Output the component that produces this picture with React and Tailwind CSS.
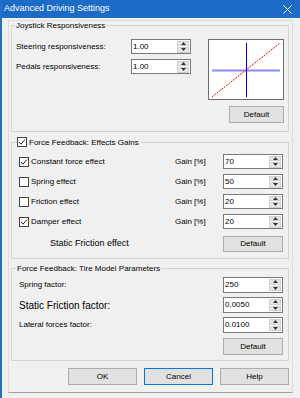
import React from 'react';

function Arrow({ up }) {
  return (
    <svg width="5" height="3" viewBox="0 0 5 3">
      <polygon points={up ? '0,3 2.5,0 5,3' : '0,0 2.5,3 5,0'} fill="#333" />
    </svg>
  );
}

function SpinBox({ value, h = 'h-[15px]' }) {
  return (
    <div className={`flex ${h} w-[60px] shrink-0 items-center border border-[#7a7a7a] bg-white pl-[1px]`}>
      <span className="flex-1 text-[8px] leading-none">{value}</span>
      <div className="mr-[1px] flex h-[12px] w-[12px] flex-col gap-[1px]">
        <div className="flex flex-1 items-center justify-center border border-[#cfcfcf] bg-[#e6e6e6]">
          <Arrow up />
        </div>
        <div className="flex flex-1 items-center justify-center border border-[#cfcfcf] bg-[#e6e6e6]">
          <Arrow />
        </div>
      </div>
    </div>
  );
}

function Check({ on }) {
  return (
    <div className="flex h-[10px] w-[10px] shrink-0 items-center justify-center border border-[#444] bg-white">
      {on && (
        <svg width="8" height="8" viewBox="0 0 8 8">
          <path d="M1 4 L3 6.2 L7 1.5" fill="none" stroke="#222" strokeWidth="1" />
        </svg>
      )}
    </div>
  );
}

function Btn({ children, w = 'w-[60px]', h = 'h-[17px]', focus }) {
  return (
    <div
      className={`flex ${w} ${h} shrink-0 items-center justify-center border ${
        focus ? 'border-[#0078d7]' : 'border-[#adadad]'
      } bg-[#e1e1e1] text-[8px] leading-none`}
    >
      {children}
    </div>
  );
}

function Group({ title, className = '', children }) {
  return (
    <div className={`ml-[2px] w-[278px] border border-[#d5d5d5] ${className}`}>
      {title}
      {children}
    </div>
  );
}

const effects = [
  { name: 'Constant force effect', on: true, gain: '70' },
  { name: 'Spring effect', on: false, gain: '50' },
  { name: 'Friction effect', on: false, gain: '20' },
  { name: 'Damper effect', on: true, gain: '20' },
];

export default function App() {
  return (
    <div className="flex h-[398px] w-[300px] flex-col overflow-hidden border-l-2 border-[#2370c8] bg-[#f0f0f0] font-['Liberation_Sans',Arial,sans-serif] text-black">
      {/* title bar */}
      <div className="flex h-[18px] shrink-0 items-center justify-between bg-[#1c6bc7] pl-[2px] pr-[8px] text-[9px] text-white">
        <span>Advanced Driving Settings</span>
        <svg width="9" height="9" viewBox="0 0 9 9">
          <path d="M0.5 0.5 L8.5 8.5 M8.5 0.5 L0.5 8.5" stroke="#fff" strokeWidth="1" />
        </svg>
      </div>

      <div className="ml-[6px] mt-[2px] flex w-[285px] flex-col border border-[#dcdcdc] border-b-[#a0a0a0] pb-[7px]">
        {/* joystick */}
        <Group
          className="mt-[4px]"
          title={
            <div className="-mt-[5px] ml-[3px] w-fit bg-[#f0f0f0] px-[1px] text-[8px] leading-[9px]">
              Joystick Responsiveness
            </div>
          }
        >
          <div className="flex justify-between pb-[8px] pl-[4px] pr-[4px] pt-[9px]">
            <div className="flex flex-col gap-[5px]">
              <div className="flex items-center">
                <span className="w-[115px] text-[8px]">Steering responsiveness:</span>
                <SpinBox value="1.00" />
              </div>
              <div className="flex items-center">
                <span className="w-[115px] text-[8px]">Pedals responsiveness:</span>
                <SpinBox value="1.00" />
              </div>
            </div>
            <div className="flex flex-col items-end">
              <div className="h-[61px] w-[76px] border border-[#6e6e6e] bg-white">
                <svg width="74" height="59" viewBox="0 0 74 59">
                  <line x1="3" y1="30.5" x2="71" y2="30.5" stroke="#8a8aff" strokeWidth="2" />
                  <line x1="37.5" y1="3" x2="37.5" y2="57" stroke="#0000e0" strokeWidth="1" />
                  <line x1="3" y1="57" x2="71" y2="3" stroke="#ff0000" strokeWidth="1" strokeDasharray="2 1" />
                </svg>
              </div>
              <div className="mt-[6px]">
                <Btn w="w-[55px]">Default</Btn>
              </div>
            </div>
          </div>
        </Group>

        {/* effects gains */}
        <Group
          className="mt-[10px]"
          title={
            <div className="-mt-[6px] ml-[5px] flex h-[10px] w-fit items-center gap-[2px] bg-[#f0f0f0] pr-[2px]">
              <Check on />
              <span className="text-[8px] leading-[9px]">Force Feedback: Effects Gains</span>
            </div>
          }
        >
          <div className="flex flex-col gap-[5px] pl-[7px] pr-[5px] pt-[7px]">
            {effects.map((e) => (
              <div key={e.name} className="flex h-[15px] items-center">
                <Check on={e.on} />
                <span className="ml-[2px] flex-1 text-[8px]">{e.name}</span>
                <span className="w-[48px] text-[8px]">Gain [%]</span>
                <SpinBox value={e.gain} />
              </div>
            ))}
          </div>
          <div className="mt-[7px] flex items-center justify-between pb-[6px] pl-[38px] pr-[5px]">
            <span className="text-[9px]">Static Friction effect</span>
            <Btn h="h-[16px]">Default</Btn>
          </div>
        </Group>

        {/* tire model */}
        <Group
          className="mt-[9px]"
          title={
            <div className="-mt-[5px] ml-[4px] w-fit bg-[#f0f0f0] px-[1px] text-[8px] leading-[9px]">
              Force Feedback: Tire Model Parameters
            </div>
          }
        >
          <div className="flex flex-col gap-[4px] pl-[7px] pr-[5px] pt-[4px]">
            <div className="flex items-center justify-between">
              <span className="text-[8px]">Spring factor:</span>
              <SpinBox value="250" h="h-[16px]" />
            </div>
            <div className="flex items-center justify-between">
              <span className="text-[10px]">Static Friction factor:</span>
              <SpinBox value="0.0050" h="h-[16px]" />
            </div>
            <div className="flex items-center justify-between">
              <span className="text-[8px]">Lateral forces factor:</span>
              <SpinBox value="0.0100" h="h-[16px]" />
            </div>
          </div>
          <div className="mt-[5px] flex justify-end pb-[5px] pr-[5px]">
            <Btn>Default</Btn>
          </div>
        </Group>

        {/* dialog buttons */}
        <div className="mt-[7px] flex justify-end gap-[7px] pr-[3px]">
          <Btn w="w-[69px]">OK</Btn>
          <Btn w="w-[69px]" focus>
            Cancel
          </Btn>
          <Btn w="w-[69px]">Help</Btn>
        </div>
      </div>
    </div>
  );
}
